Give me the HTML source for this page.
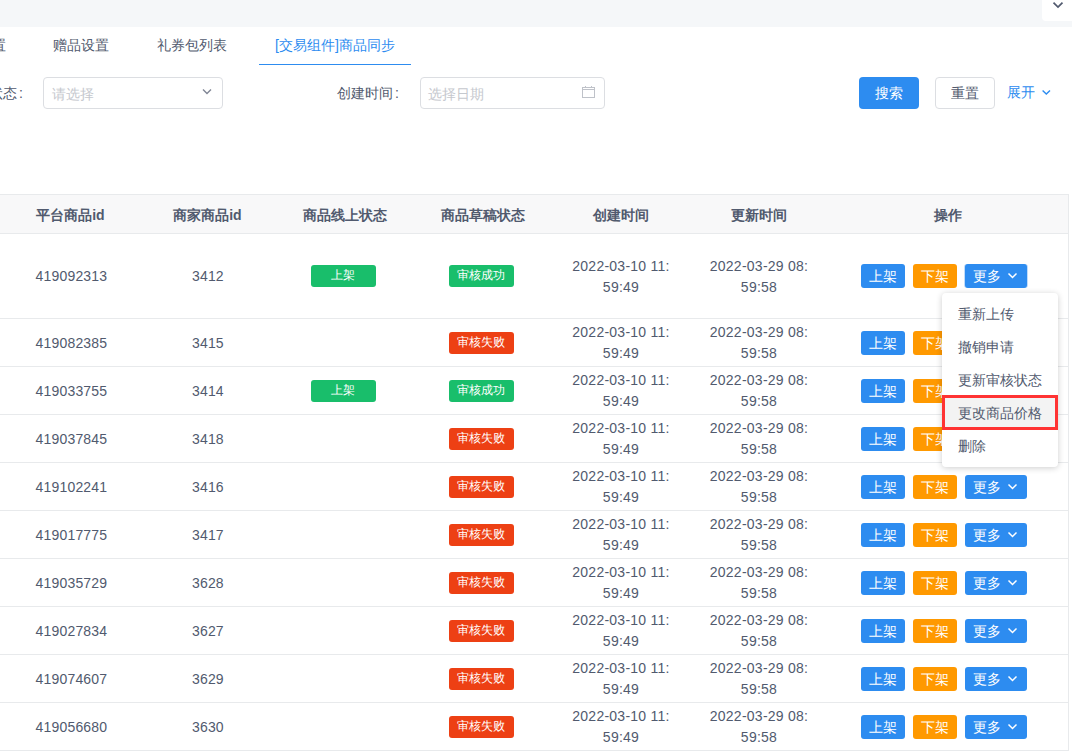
<!DOCTYPE html>
<html><head><meta charset="utf-8">
<style>
*{box-sizing:border-box;margin:0;padding:0}
html,body{width:1072px;height:755px;overflow:hidden;background:#fff}
body{position:relative;font-family:"Liberation Sans",sans-serif;font-size:14px;color:#515a6e}
.abs{position:absolute}
.topbar{left:0;top:0;width:1072px;height:27px;background:#f5f7f9}
.topbox{left:1042px;top:0;width:30px;height:21px;background:#fff;border-bottom-left-radius:4px}
.t{position:absolute;white-space:nowrap;line-height:14px;font-size:14px}
.tab{top:38px;color:#515a6e}
.tab.act{color:#2d8cf0}
.ink{left:259px;top:64px;width:152px;height:1px;background:#2d8cf0}
.inp{border:1px solid #dcdee2;border-radius:4px;background:#fff}
.ph{color:#c5c8ce}
.btn{position:absolute;border-radius:4px;text-align:center;color:#fff;font-size:14px}
.th{top:208px;font-weight:bold;color:#515a6e}
.hline{position:absolute;left:0;width:1069px;height:1px;background:#e8eaec}
</style></head><body>
<div class="abs topbar"></div>
<div class="abs topbox"><svg width="30" height="21" style="position:absolute;left:0;top:0"><path d="M11.5 2.6 L16 7 L20.5 2.6" fill="none" stroke="#515a6e" stroke-width="1.7"/></svg></div>

<!-- tabs -->
<div class="t tab" style="left:-22px">设置</div>
<div class="t tab" style="left:53px">赠品设置</div>
<div class="t tab" style="left:157px">礼券包列表</div>
<div class="t tab act" style="left:275px">[交易组件]商品同步</div>
<div class="abs ink"></div>

<!-- filters -->
<div class="t" style="left:-25px;top:86px">品状态<span style="margin-left:2px">:</span></div>
<div class="abs inp" style="left:43px;top:77px;width:180px;height:32px"></div>
<div class="t ph" style="left:52px;top:87px">请选择</div>
<svg class="abs" style="left:200px;top:86px" width="14" height="10"><path d="M3 3.4 L7 7.4 L11 3.4" fill="none" stroke="#808695" stroke-width="1.4"/></svg>

<div class="t" style="left:337px;top:86px">创建时间<span style="margin-left:2px">:</span></div>
<div class="abs inp" style="left:420px;top:77px;width:185px;height:32px"></div>
<div class="t ph" style="left:428px;top:87px">选择日期</div>
<svg class="abs" style="left:581px;top:85px" width="16" height="14"><rect x="1.5" y="2.5" width="12" height="10" fill="none" stroke="#bfc2c9" stroke-width="1"/><path d="M1.5 4.5 H13.5 M4.5 1 V2.5 M10.5 1 V2.5" stroke="#bfc2c9" stroke-width="1"/></svg>

<div class="btn" style="left:859px;top:77px;width:60px;height:32px;background:#2d8cf0;line-height:32px">搜索</div>
<div class="btn inp" style="left:935px;top:77px;width:60px;height:32px;color:#515a6e;line-height:30px">重置</div>
<div class="t" style="left:1007px;top:85px;color:#2d8cf0">展开</div>
<svg class="abs" style="left:1040px;top:87px" width="12" height="10"><path d="M2.6 3.4 L6.3 7 L10 3.4" fill="none" stroke="#2d8cf0" stroke-width="1.4"/></svg>

<!-- table -->
<div class="abs" style="left:0;top:195px;width:1068px;height:38px;background:#f8f8f9"></div>
<div class="hline" style="top:194px"></div>
<div class="hline" style="top:233px"></div>
<div class="abs" style="left:1068px;top:194px;width:1px;height:557px;background:#e8eaec"></div>
<style>
.tag{position:absolute;width:65px;height:22px;border-radius:3px;color:#fff;font-size:12px;line-height:21px;text-align:center;padding-right:1px}
.dt{position:absolute;width:120px;text-align:center;line-height:21px;font-size:14px;letter-spacing:.25px}
.num{letter-spacing:.2px}
.sb{height:24px;line-height:24px;border-radius:3px}
</style><div class="t th" style="left:-29.6px;width:200px;text-align:center">平台商品id</div>
<div class="t th" style="left:107.4px;width:200px;text-align:center">商家商品id</div>
<div class="t th" style="left:245.3px;width:200px;text-align:center">商品线上状态</div>
<div class="t th" style="left:383.2px;width:200px;text-align:center">商品草稿状态</div>
<div class="t th" style="left:521.0px;width:200px;text-align:center">创建时间</div>
<div class="t th" style="left:659.0px;width:200px;text-align:center">更新时间</div>
<div class="t th" style="left:848.0px;width:200px;text-align:center">操作</div>
<div class="hline" style="top:318px"></div>
<div class="t num" style="left:-28.6px;width:200px;text-align:center;top:269.0px">419092313</div>
<div class="t num" style="left:107.9px;width:200px;text-align:center;top:269.0px">3412</div>
<div class="tag" style="left:311px;top:265.0px;background:#19be6b">上架</div>
<div class="tag" style="left:449px;top:265.0px;background:#19be6b">审核成功</div>
<div class="dt" style="left:561px;top:256px">2022-03-10 11:<br>59:49</div>
<div class="dt" style="left:699px;top:256px">2022-03-29 08:<br>59:58</div>
<div class="btn sb" style="left:861px;top:264.0px;width:44px;background:#2d8cf0">上架</div>
<div class="btn sb" style="left:913px;top:264.0px;width:44px;background:#ff9900">下架</div>
<div class="btn sb" style="left:965px;top:264.0px;width:62px;background:#2d8cf0;text-align:left;padding-left:8px;box-shadow:-1px 0 0 rgba(45,140,240,.3),1px 0 0 rgba(45,140,240,.3)">更多<svg class="abs" style="left:42px;top:8px" width="11" height="8"><path d="M1.5 1.5 L5.5 5.5 L9.5 1.5" fill="none" stroke="#fff" stroke-width="1.5"/></svg></div>
<div class="hline" style="top:366px"></div>
<div class="t num" style="left:-28.6px;width:200px;text-align:center;top:335.5px">419082385</div>
<div class="t num" style="left:107.9px;width:200px;text-align:center;top:335.5px">3415</div>
<div class="tag" style="left:449px;top:331.5px;background:#ed4014">审核失败</div>
<div class="dt" style="left:561px;top:322px">2022-03-10 11:<br>59:49</div>
<div class="dt" style="left:699px;top:322px">2022-03-29 08:<br>59:58</div>
<div class="btn sb" style="left:861px;top:330.5px;width:44px;background:#2d8cf0">上架</div>
<div class="btn sb" style="left:913px;top:330.5px;width:44px;background:#ff9900">下架</div>
<div class="btn sb" style="left:965px;top:330.5px;width:62px;background:#2d8cf0;text-align:left;padding-left:8px">更多<svg class="abs" style="left:42px;top:8px" width="11" height="8"><path d="M1.5 1.5 L5.5 5.5 L9.5 1.5" fill="none" stroke="#fff" stroke-width="1.5"/></svg></div>
<div class="hline" style="top:414px"></div>
<div class="t num" style="left:-28.6px;width:200px;text-align:center;top:383.5px">419033755</div>
<div class="t num" style="left:107.9px;width:200px;text-align:center;top:383.5px">3414</div>
<div class="tag" style="left:311px;top:379.5px;background:#19be6b">上架</div>
<div class="tag" style="left:449px;top:379.5px;background:#19be6b">审核成功</div>
<div class="dt" style="left:561px;top:370px">2022-03-10 11:<br>59:49</div>
<div class="dt" style="left:699px;top:370px">2022-03-29 08:<br>59:58</div>
<div class="btn sb" style="left:861px;top:378.5px;width:44px;background:#2d8cf0">上架</div>
<div class="btn sb" style="left:913px;top:378.5px;width:44px;background:#ff9900">下架</div>
<div class="btn sb" style="left:965px;top:378.5px;width:62px;background:#2d8cf0;text-align:left;padding-left:8px">更多<svg class="abs" style="left:42px;top:8px" width="11" height="8"><path d="M1.5 1.5 L5.5 5.5 L9.5 1.5" fill="none" stroke="#fff" stroke-width="1.5"/></svg></div>
<div class="hline" style="top:462px"></div>
<div class="t num" style="left:-28.6px;width:200px;text-align:center;top:431.5px">419037845</div>
<div class="t num" style="left:107.9px;width:200px;text-align:center;top:431.5px">3418</div>
<div class="tag" style="left:449px;top:427.5px;background:#ed4014">审核失败</div>
<div class="dt" style="left:561px;top:418px">2022-03-10 11:<br>59:49</div>
<div class="dt" style="left:699px;top:418px">2022-03-29 08:<br>59:58</div>
<div class="btn sb" style="left:861px;top:426.5px;width:44px;background:#2d8cf0">上架</div>
<div class="btn sb" style="left:913px;top:426.5px;width:44px;background:#ff9900">下架</div>
<div class="btn sb" style="left:965px;top:426.5px;width:62px;background:#2d8cf0;text-align:left;padding-left:8px">更多<svg class="abs" style="left:42px;top:8px" width="11" height="8"><path d="M1.5 1.5 L5.5 5.5 L9.5 1.5" fill="none" stroke="#fff" stroke-width="1.5"/></svg></div>
<div class="hline" style="top:510px"></div>
<div class="t num" style="left:-28.6px;width:200px;text-align:center;top:479.5px">419102241</div>
<div class="t num" style="left:107.9px;width:200px;text-align:center;top:479.5px">3416</div>
<div class="tag" style="left:449px;top:475.5px;background:#ed4014">审核失败</div>
<div class="dt" style="left:561px;top:466px">2022-03-10 11:<br>59:49</div>
<div class="dt" style="left:699px;top:466px">2022-03-29 08:<br>59:58</div>
<div class="btn sb" style="left:861px;top:474.5px;width:44px;background:#2d8cf0">上架</div>
<div class="btn sb" style="left:913px;top:474.5px;width:44px;background:#ff9900">下架</div>
<div class="btn sb" style="left:965px;top:474.5px;width:62px;background:#2d8cf0;text-align:left;padding-left:8px">更多<svg class="abs" style="left:42px;top:8px" width="11" height="8"><path d="M1.5 1.5 L5.5 5.5 L9.5 1.5" fill="none" stroke="#fff" stroke-width="1.5"/></svg></div>
<div class="hline" style="top:558px"></div>
<div class="t num" style="left:-28.6px;width:200px;text-align:center;top:527.5px">419017775</div>
<div class="t num" style="left:107.9px;width:200px;text-align:center;top:527.5px">3417</div>
<div class="tag" style="left:449px;top:523.5px;background:#ed4014">审核失败</div>
<div class="dt" style="left:561px;top:514px">2022-03-10 11:<br>59:49</div>
<div class="dt" style="left:699px;top:514px">2022-03-29 08:<br>59:58</div>
<div class="btn sb" style="left:861px;top:522.5px;width:44px;background:#2d8cf0">上架</div>
<div class="btn sb" style="left:913px;top:522.5px;width:44px;background:#ff9900">下架</div>
<div class="btn sb" style="left:965px;top:522.5px;width:62px;background:#2d8cf0;text-align:left;padding-left:8px">更多<svg class="abs" style="left:42px;top:8px" width="11" height="8"><path d="M1.5 1.5 L5.5 5.5 L9.5 1.5" fill="none" stroke="#fff" stroke-width="1.5"/></svg></div>
<div class="hline" style="top:606px"></div>
<div class="t num" style="left:-28.6px;width:200px;text-align:center;top:575.5px">419035729</div>
<div class="t num" style="left:107.9px;width:200px;text-align:center;top:575.5px">3628</div>
<div class="tag" style="left:449px;top:571.5px;background:#ed4014">审核失败</div>
<div class="dt" style="left:561px;top:562px">2022-03-10 11:<br>59:49</div>
<div class="dt" style="left:699px;top:562px">2022-03-29 08:<br>59:58</div>
<div class="btn sb" style="left:861px;top:570.5px;width:44px;background:#2d8cf0">上架</div>
<div class="btn sb" style="left:913px;top:570.5px;width:44px;background:#ff9900">下架</div>
<div class="btn sb" style="left:965px;top:570.5px;width:62px;background:#2d8cf0;text-align:left;padding-left:8px">更多<svg class="abs" style="left:42px;top:8px" width="11" height="8"><path d="M1.5 1.5 L5.5 5.5 L9.5 1.5" fill="none" stroke="#fff" stroke-width="1.5"/></svg></div>
<div class="hline" style="top:654px"></div>
<div class="t num" style="left:-28.6px;width:200px;text-align:center;top:623.5px">419027834</div>
<div class="t num" style="left:107.9px;width:200px;text-align:center;top:623.5px">3627</div>
<div class="tag" style="left:449px;top:619.5px;background:#ed4014">审核失败</div>
<div class="dt" style="left:561px;top:610px">2022-03-10 11:<br>59:49</div>
<div class="dt" style="left:699px;top:610px">2022-03-29 08:<br>59:58</div>
<div class="btn sb" style="left:861px;top:618.5px;width:44px;background:#2d8cf0">上架</div>
<div class="btn sb" style="left:913px;top:618.5px;width:44px;background:#ff9900">下架</div>
<div class="btn sb" style="left:965px;top:618.5px;width:62px;background:#2d8cf0;text-align:left;padding-left:8px">更多<svg class="abs" style="left:42px;top:8px" width="11" height="8"><path d="M1.5 1.5 L5.5 5.5 L9.5 1.5" fill="none" stroke="#fff" stroke-width="1.5"/></svg></div>
<div class="hline" style="top:702px"></div>
<div class="t num" style="left:-28.6px;width:200px;text-align:center;top:671.5px">419074607</div>
<div class="t num" style="left:107.9px;width:200px;text-align:center;top:671.5px">3629</div>
<div class="tag" style="left:449px;top:667.5px;background:#ed4014">审核失败</div>
<div class="dt" style="left:561px;top:658px">2022-03-10 11:<br>59:49</div>
<div class="dt" style="left:699px;top:658px">2022-03-29 08:<br>59:58</div>
<div class="btn sb" style="left:861px;top:666.5px;width:44px;background:#2d8cf0">上架</div>
<div class="btn sb" style="left:913px;top:666.5px;width:44px;background:#ff9900">下架</div>
<div class="btn sb" style="left:965px;top:666.5px;width:62px;background:#2d8cf0;text-align:left;padding-left:8px">更多<svg class="abs" style="left:42px;top:8px" width="11" height="8"><path d="M1.5 1.5 L5.5 5.5 L9.5 1.5" fill="none" stroke="#fff" stroke-width="1.5"/></svg></div>
<div class="hline" style="top:750px"></div>
<div class="t num" style="left:-28.6px;width:200px;text-align:center;top:719.5px">419056680</div>
<div class="t num" style="left:107.9px;width:200px;text-align:center;top:719.5px">3630</div>
<div class="tag" style="left:449px;top:715.5px;background:#ed4014">审核失败</div>
<div class="dt" style="left:561px;top:706px">2022-03-10 11:<br>59:49</div>
<div class="dt" style="left:699px;top:706px">2022-03-29 08:<br>59:58</div>
<div class="btn sb" style="left:861px;top:714.5px;width:44px;background:#2d8cf0">上架</div>
<div class="btn sb" style="left:913px;top:714.5px;width:44px;background:#ff9900">下架</div>
<div class="btn sb" style="left:965px;top:714.5px;width:62px;background:#2d8cf0;text-align:left;padding-left:8px">更多<svg class="abs" style="left:42px;top:8px" width="11" height="8"><path d="M1.5 1.5 L5.5 5.5 L9.5 1.5" fill="none" stroke="#fff" stroke-width="1.5"/></svg></div>
<div class="abs" style="left:942px;top:293px;width:116px;height:174px;background:#fff;border-radius:4px;box-shadow:0 1px 6px rgba(0,0,0,.2)"></div>
<div class="abs" style="left:942px;top:395px;width:116px;height:35px;background:#f3f3f3;border:3px solid #ff3333"></div>

<div class="t" style="left:958px;top:307px">重新上传</div>
<div class="t" style="left:958px;top:340px">撤销申请</div>
<div class="t" style="left:958px;top:373px">更新审核状态</div>
<div class="t" style="left:958px;top:406px">更改商品价格</div>
<div class="t" style="left:958px;top:439px">删除</div>
</body></html>
